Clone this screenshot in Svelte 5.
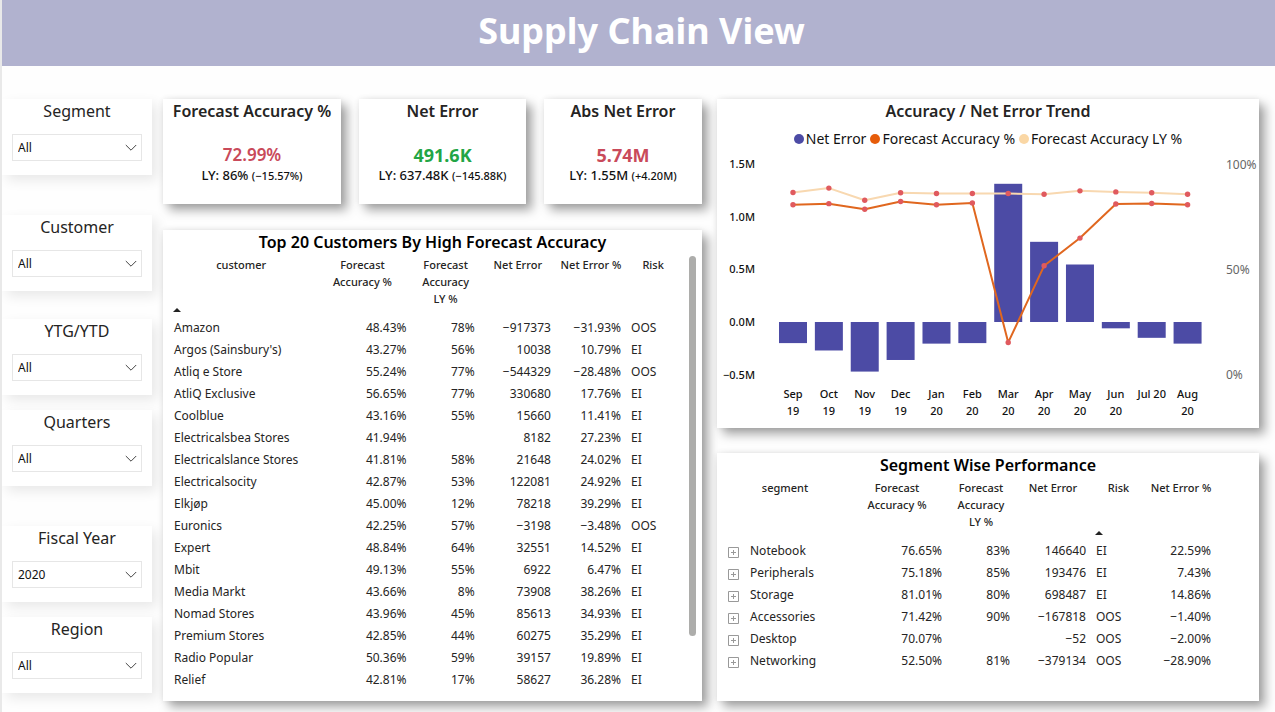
<script>
  const filters = [
    { id: 'segment', label: 'Segment', value: 'All', space: 'none' },
    { id: 'customer', label: 'Customer', value: 'All', space: 'wide' },
    { id: 'period', label: 'YTG/YTD', value: 'All', space: 'medium' },
    { id: 'quarters', label: 'Quarters', value: 'All', space: 'narrow' },
    { id: 'year', label: 'Fiscal Year', value: '2020', space: 'wide' },
    { id: 'region', label: 'Region', value: 'All', space: 'narrow' }
  ];

  const kpis = [
    { title: 'Forecast Accuracy %', value: '72.99%', tone: 'bad', last: '86%', change: '(−15.57%)', percent: true },
    { title: 'Net Error', value: '491.6K', tone: 'good', last: '637.48K', change: '(−145.88K)' },
    { title: 'Abs Net Error', value: '5.74M', tone: 'bad', last: '1.55M', change: '(+4.20M)' }
  ];

  const customers = [
    ['Amazon', '48.43%', '78%', '−917373', '−31.93%', 'OOS'],
    ["Argos (Sainsbury's)", '43.27%', '56%', '10038', '10.79%', 'EI'],
    ['Atliq e Store', '55.24%', '77%', '−544329', '−28.48%', 'OOS'],
    ['AtliQ Exclusive', '56.65%', '77%', '330680', '17.76%', 'EI'],
    ['Coolblue', '43.16%', '55%', '15660', '11.41%', 'EI'],
    ['Electricalsbea Stores', '41.94%', '', '8182', '27.23%', 'EI'],
    ['Electricalslance Stores', '41.81%', '58%', '21648', '24.02%', 'EI'],
    ['Electricalsocity', '42.87%', '53%', '122081', '24.92%', 'EI'],
    ['Elkjøp', '45.00%', '12%', '78218', '39.29%', 'EI'],
    ['Euronics', '42.25%', '57%', '−3198', '−3.48%', 'OOS'],
    ['Expert', '48.84%', '64%', '32551', '14.52%', 'EI'],
    ['Mbit', '49.13%', '55%', '6922', '6.47%', 'EI'],
    ['Media Markt', '43.66%', '8%', '73908', '38.26%', 'EI'],
    ['Nomad Stores', '43.96%', '45%', '85613', '34.93%', 'EI'],
    ['Premium Stores', '42.85%', '44%', '60275', '35.29%', 'EI'],
    ['Radio Popular', '50.36%', '59%', '39157', '19.89%', 'EI'],
    ['Relief', '42.81%', '17%', '58627', '36.28%', 'EI']
  ];

  const segments = [
    ['Notebook', '76.65%', '83%', '146640', 'EI', '22.59%'],
    ['Peripherals', '75.18%', '85%', '193476', 'EI', '7.43%'],
    ['Storage', '81.01%', '80%', '698487', 'EI', '14.86%'],
    ['Accessories', '71.42%', '90%', '−167818', 'OOS', '−1.40%'],
    ['Desktop', '70.07%', '', '−52', 'OOS', '−2.00%'],
    ['Networking', '52.50%', '81%', '−379134', 'OOS', '−28.90%']
  ];

  // Net error in millions, accuracies in percent
  const months = [
    { m: 'Sep', y: '19', net: -0.2, acc: 81.1, ly: 86.9 },
    { m: 'Oct', y: '19', net: -0.27, acc: 81.6, ly: 89 },
    { m: 'Nov', y: '19', net: -0.47, acc: 78.9, ly: 83.2 },
    { m: 'Dec', y: '19', net: -0.36, acc: 82.6, ly: 86.8 },
    { m: 'Jan', y: '20', net: -0.205, acc: 81.1, ly: 86.4 },
    { m: 'Feb', y: '20', net: -0.2, acc: 81.9, ly: 86.4 },
    { m: 'Mar', y: '20', net: 1.31, acc: 15.5, ly: 86.4 },
    { m: 'Apr', y: '20', net: 0.76, acc: 52, ly: 86.1 },
    { m: 'May', y: '20', net: 0.545, acc: 65.2, ly: 87.7 },
    { m: 'Jun', y: '20', net: -0.06, acc: 81.4, ly: 87.2 },
    { m: 'Jul', y: '20', net: -0.15, acc: 81.7, ly: 86.8 },
    { m: 'Aug', y: '20', net: -0.205, acc: 81.1, ly: 86.1 }
  ];

  const zero = 173;
  const x = (i) => 76 + i * 35.87;
  const yNet = (v) => zero - v * 105.5;
  const yPct = (v) => 226 - v * 2.1;
  const line = (key) => months.map((d, i) => `${x(i)},${yPct(d[key])}`).join(' ');

  const netTicks = [['1.5M', 1.5], ['1.0M', 1], ['0.5M', 0.5], ['0.0M', 0], ['−0.5M', -0.5]];
  const pctTicks = [100, 50, 0];
</script>

<div class="page">
  <header><h1>Supply Chain View</h1></header>

  <main>
    <aside>
      {#each filters as f}
        <div class="filter {f.space}">
          <label for={f.id}>{f.label}</label>
          <div class="pick">
            <select id={f.id}><option>{f.value}</option></select>
            <svg width="12" height="8" viewBox="0 0 12 8" aria-hidden="true"><path d="M0.8 1 L6 6.2 L11.2 1" /></svg>
          </div>
        </div>
      {/each}
    </aside>

    <div class="middle">
      <div class="kpis">
        {#each kpis as k}
          <section class="card kpi">
            <h2>{k.title}</h2>
            <p class="value {k.tone}" class:percent={k.percent}>{k.value}</p>
            <p class="last">LY: {k.last} <small>{k.change}</small></p>
          </section>
        {/each}
      </div>

      <section class="card customers">
        <h2>Top 20 Customers By High Forecast Accuracy</h2>
        <div class="scroll">
          <table>
            <colgroup><col class="c-name" /><col class="c-acc" /><col class="c-ly" /><col class="c-net" /><col class="c-pct" /><col class="c-risk" /></colgroup>
            <thead>
              <tr>
                <th>customer<i class="sort"></i></th>
                <th>Forecast<br />Accuracy %</th>
                <th>Forecast<br />Accuracy<br />LY %</th>
                <th>Net Error</th>
                <th>Net Error %</th>
                <th>Risk</th>
              </tr>
            </thead>
            <tbody>
              {#each customers as row}
                <tr>
                  {#each row as cell, i}<td class:num={i > 0 && i < 5}>{cell}</td>{/each}
                </tr>
              {/each}
            </tbody>
          </table>
          <div class="track"><div class="thumb"></div></div>
        </div>
      </section>
    </div>

    <div class="right">
      <section class="card trend">
        <h2>Accuracy / Net Error Trend</h2>
        <ul class="legend">
          <li><i class="dot net"></i>Net Error</li>
          <li><i class="dot acc"></i>Forecast Accuracy %</li>
          <li><i class="dot ly"></i>Forecast Accuracy LY %</li>
        </ul>
        <svg class="chart" viewBox="0 0 542 279" role="img" aria-label="Accuracy / Net Error Trend">
          {#each netTicks as [text, v]}
            <text class="tick" x="38" y={yNet(v) + 4} text-anchor="end">{text}</text>
          {/each}
          {#each pctTicks as v}
            <text class="pct" x="509" y={yPct(v) + 4}>{v}%</text>
          {/each}
          {#each months as d, i}
            <rect class="bar" x={x(i) - 14} y={Math.min(zero, yNet(d.net))} width="28" height={Math.abs(d.net) * 105.5} />
            {#if d.m === 'Jul'}
              <text class="tick" x={x(i)} y="249" text-anchor="middle">{d.m} {d.y}</text>
            {:else}
              <text class="tick" x={x(i)} y="249" text-anchor="middle">{d.m}</text>
              <text class="tick" x={x(i)} y="266" text-anchor="middle">{d.y}</text>
            {/if}
          {/each}
          <polyline class="acc" points={line('acc')} />
          <polyline class="ly" points={line('ly')} />
          {#each months as d, i}
            <circle cx={x(i)} cy={yPct(d.acc)} r="2.7" />
            <circle cx={x(i)} cy={yPct(d.ly)} r="2.7" />
          {/each}
        </svg>
      </section>

      <section class="card segments">
        <h2>Segment Wise Performance</h2>
        <table>
          <colgroup><col class="s-name" /><col class="s-acc" /><col class="c-ly" /><col class="c-net" /><col class="s-risk" /><col class="c-pct" /></colgroup>
          <thead>
            <tr>
              <th>segment</th>
              <th>Forecast<br />Accuracy %</th>
              <th>Forecast<br />Accuracy<br />LY %</th>
              <th>Net Error</th>
              <th>Risk<i class="sort"></i></th>
              <th>Net Error %</th>
            </tr>
          </thead>
          <tbody>
            {#each segments as row}
              <tr>
                {#each row as cell, i}
                  {#if i === 0}
                    <td>
                      <div class="name">
                        <button aria-label="Expand {cell}">
                          <svg width="11" height="11" viewBox="0 0 11 11" aria-hidden="true"><path d="M0.5 0.5H10.5V10.5H0.5Z M3 5.5H8 M5.5 3V8" /></svg>
                        </button>
                        <span>{cell}</span>
                      </div>
                    </td>
                  {:else}
                    <td class:num={i !== 4}>{cell}</td>
                  {/if}
                {/each}
              </tr>
            {/each}
          </tbody>
        </table>
      </section>
    </div>
  </main>
</div>

<style>
  :global(body) { background: #fefefe; }
  .page {
    box-sizing: border-box;
    min-height: 100vh;
    border-left: 2px solid #e9e9e9;
    font-family: "Noto Sans", "Open Sans", sans-serif;
    color: #252423;
    overflow: hidden;
  }
  h1, h2, p, ul { margin: 0; padding: 0; }
  header {
    height: 66px;
    display: flex;
    align-items: center;
    justify-content: center;
    background: #b1b2cf;
  }
  h1 { font-size: 36px; line-height: 62px; font-weight: 700; color: #fff; padding: 0 0 4px 6px; }

  main {
    display: grid;
    grid-template-columns: 150px minmax(0, 550fr) minmax(0, 557fr);
    padding: 33px 16px 11px 0;
    align-items: start;
  }
  .middle { margin-left: 11px; display: grid; gap: 26px; }
  .right { margin-left: 15px; display: grid; gap: 25px; }

  .filter {
    box-sizing: border-box;
    min-height: 76px;
    padding: 0 10px 14px;
    background: #fff;
    box-shadow: 5px 5px 12px rgba(0, 0, 0, 0.09);
  }
  .narrow { margin-top: 15px; }
  .medium { margin-top: 28px; }
  .wide { margin-top: 40px; }
  .filter label { display: block; text-align: center; font-size: 16px; line-height: 24px; padding-bottom: 11px; }
  .pick { display: grid; align-items: center; }
  .pick > * { grid-area: 1 / 1; }
  select {
    appearance: none;
    box-sizing: border-box;
    width: 100%;
    height: 27px;
    margin: 0;
    padding: 0 24px 0 5px;
    border: 1px solid #e6e6e6;
    border-radius: 0;
    background: #fff;
    color: #111;
    font: 12px "Noto Sans", sans-serif;
  }
  .pick svg { justify-self: end; margin-right: 5px; pointer-events: none; fill: none; stroke: #444; }

  .card {
    background: #fff;
    box-shadow: 6px 6px 10px rgba(0, 0, 0, 0.36), 0 0 6px rgba(0, 0, 0, 0.08);
  }
  h2 { font-size: 16px; line-height: 24px; font-weight: 600; text-align: center; white-space: nowrap; }

  .kpis { display: grid; grid-template-columns: 178fr 167fr 158fr; gap: 18px; }
  .kpi { min-height: 105px; text-align: center; }
  .value { padding-top: 21px; font-size: 18px; line-height: 22px; font-weight: 700; }
  .percent { font-size: 17px; font-weight: 600; }
  .good { color: #22a545; }
  .bad { color: #c94a5a; }
  .last { font-size: 13px; line-height: 18px; font-weight: 500; color: #111; }
  .last small { font-size: 11px; }

  .customers, .segments { padding: 0 6px; color: #000; }
  .customers { padding-bottom: 10px; }
  .scroll { display: flex; justify-content: space-between; }
  .scroll table { flex: 0 1 97%; }
  table { border-collapse: collapse; table-layout: fixed; }
  .c-name { width: 144px; }
  .c-acc { width: 98px; }
  .c-ly { width: 68px; }
  .c-net { width: 76px; }
  .c-pct { width: 70px; }
  .c-risk { width: 54px; }
  .s-name { width: 124px; }
  .s-acc { width: 100px; }
  .s-risk { width: 55px; }
  th {
    box-sizing: border-box;
    height: 63px;
    padding: 2px 0 0;
    vertical-align: top;
    font-size: 11px;
    line-height: 17px;
    font-weight: 500;
    color: #252423;
    white-space: nowrap;
    position: relative;
  }
  .sort {
    position: absolute;
    left: 4px;
    bottom: 5px;
    border: 4px solid transparent;
    border-top: 0;
    border-bottom-color: #222;
  }
  td { height: 22px; padding: 0 5px; font-size: 12px; line-height: 22px; white-space: nowrap; color: #252423; }
  .num { text-align: right; }
  .track { width: 7px; padding: 2px 0 8px; }
  .thumb { width: 7px; height: 89%; border-radius: 4px; background: #adadab; }

  .legend { display: flex; justify-content: center; gap: 4px; padding: 6px 0 0; list-style: none; font-size: 14px; line-height: 20px; color: #111; }
  .legend li { display: flex; align-items: center; gap: 2px; white-space: nowrap; }
  .dot { width: 10px; height: 10px; border-radius: 50%; }
  .dot.net { background: #4c4ba5; }
  .dot.acc { background: #e65c0a; }
  .dot.ly { background: #fad7a5; }
  .chart { display: block; width: 100%; }
  .tick { font-size: 11px; font-weight: 500; fill: #111; }
  .pct { font-size: 12px; fill: #666; }
  .bar { fill: #4c4ba5; }
  polyline { fill: none; stroke-width: 2; stroke-linejoin: round; }
  polyline.acc { stroke: #e0671f; }
  polyline.ly { stroke: #f8d8b0; }
  circle { fill: #e05a5e; }

  .segments { padding-bottom: 29px; }
  .segments table { width: 93%; }
  .name { display: flex; align-items: center; gap: 11px; }
  button { display: flex; padding: 2px 0 0; border: 0; background: none; }
  button svg { fill: none; stroke: #999; }
</style>
